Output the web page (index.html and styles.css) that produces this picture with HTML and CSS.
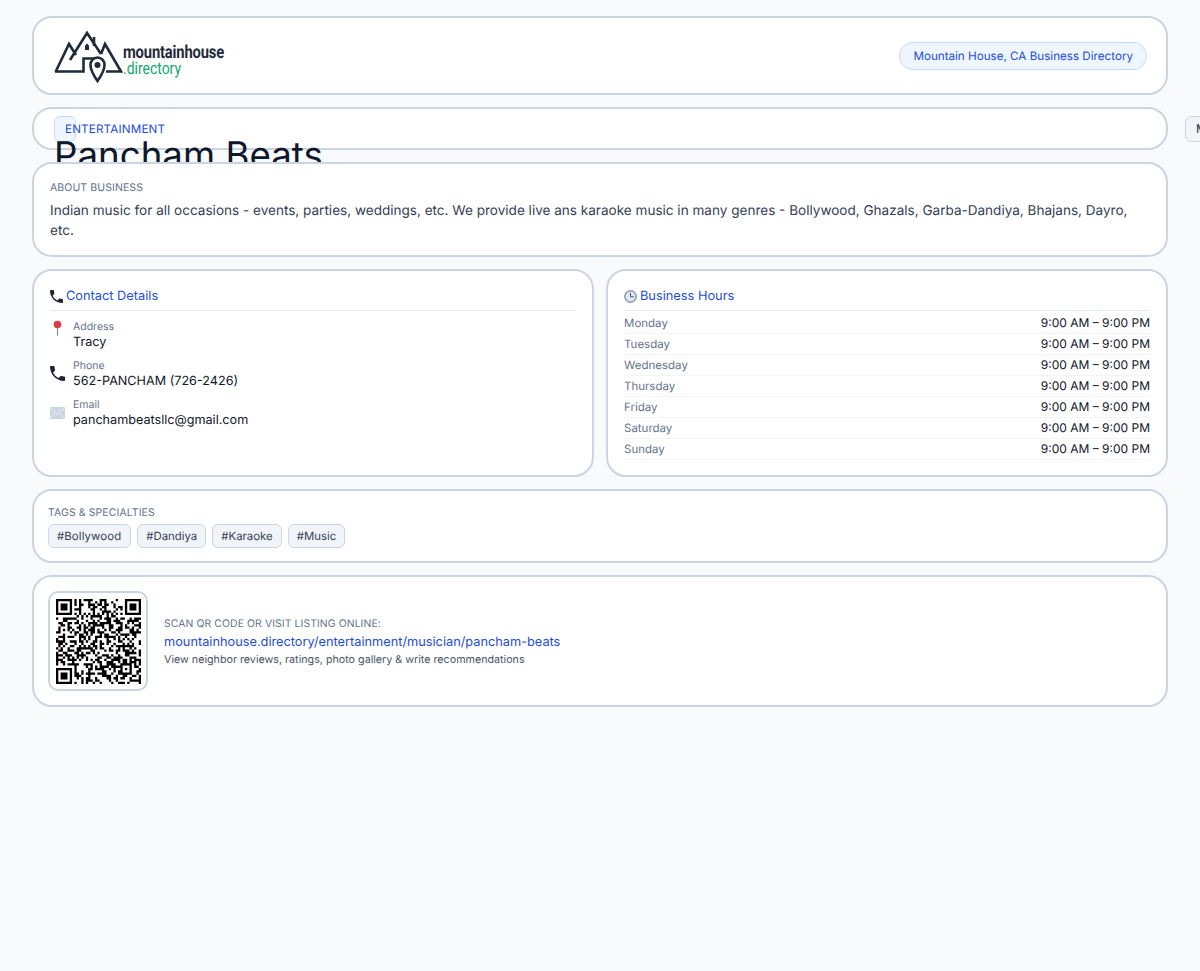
FILE: index.html
```html
<!DOCTYPE html>
<html lang="en">
<head>
<meta charset="utf-8">
<title>Pancham Beats</title>
<link rel="stylesheet" href="styles.css">
</head>
<body>
<main class="page">
  <header class="card topbar">
    <div class="logo">
      <svg class="logo-mark" viewBox="54 29 69 54" width="69" height="54" fill="none" stroke="#1f2a3a" stroke-width="2.600">
        <path d="M55.500 72 L69 44 L76 55"/>
        <path d="M70 60 L87 33 L101 54"/>
        <path d="M101 54 L105 44 L121 71.500 H106"/>
        <path d="M55 71.500 H83.500 V58.500 H95"/>
        <path d="M94 37 V46"/>
        <path d="M85 50 V45.500 L87 43.500 L89 45.500 V50 Z" fill="#1f2a3a" stroke="none"/>
        <path d="M97.500 81 C94 76 90.500 71 90.500 65 A7 7.500 0 0 1 104.500 65 C104.500 71 101 76 97.500 81 Z" fill="#fff"/>
        <circle cx="97.500" cy="65" r="3" fill="#1f2a3a" stroke="none"/>
      </svg>
      <div class="logo-text"><strong>mountainhouse</strong><span>.directory</span></div>
    </div>
    <span class="pill">Mountain House, CA Business Directory</span>
  </header>

  <section class="card hero">
    <div class="hero-left">
      <span class="category"><span class="category-label">ENTERTAINMENT</span></span>
      <h1>Pancham Beats</h1>
    </div>
    <span class="sub-chip">Musician</span>
  </section>

  <section class="card about">
    <h2 class="eyebrow">ABOUT BUSINESS</h2>
    <p>Indian music for all occasions - events, parties, weddings, etc. We provide live ans karaoke music in many genres - Bollywood, Ghazals, Garba-Dandiya, Bhajans, Dayro, etc.</p>
  </section>

  <div class="columns">
    <section class="card panel">
      <h3 class="panel-title">
        <svg class="title-icon" viewBox="3 3 18 18" width="13" height="13"><path fill="#1e2530" d="M6.620 10.790c1.440 2.830 3.760 5.140 6.590 6.590l2.200-2.200c.27-.27.67-.36 1.020-.24 1.120.37 2.330.57 3.570.57.55 0 1 .45 1 1V20c0 .55-.45 1-1 1-9.390 0-17-7.610-17-17 0-.55.45-1 1-1h3.500c.55 0 1 .45 1 1 0 1.250.2 2.450.57 3.570.11.35.03.74-.25 1.020l-2.200 2.200z"/></svg>
        Contact Details
      </h3>
      <div class="contact">
        <svg class="contact-icon pin-icon" viewBox="0 0 15 16" width="15" height="16"><path d="M7.500 7 V15.500" stroke="#8a8f98" stroke-width="1.200"/><circle cx="7.500" cy="4.500" r="3.800" fill="#dd3b4b"/></svg>
        <div><div class="contact-label">Address</div><div class="contact-value">Tracy</div></div>
      </div>
      <div class="contact">
        <svg class="contact-icon" viewBox="3 3 18 18" width="15" height="15"><path fill="#1e2530" d="M6.620 10.790c1.440 2.830 3.760 5.140 6.590 6.590l2.200-2.200c.27-.27.67-.36 1.020-.24 1.120.37 2.330.57 3.570.57.55 0 1 .45 1 1V20c0 .55-.45 1-1 1-9.390 0-17-7.610-17-17 0-.55.45-1 1-1h3.500c.55 0 1 .45 1 1 0 1.250.2 2.450.57 3.570.11.35.03.74-.25 1.020l-2.200 2.200z"/></svg>
        <div><div class="contact-label">Phone</div><div class="contact-value">562-PANCHAM (726-2426)</div></div>
      </div>
      <div class="contact">
        <svg class="contact-icon" viewBox="0 0 15 12" width="15" height="12"><rect width="15" height="12" rx="1" fill="#cbd5e1"/><path d="M.5 1 L7.500 7 L14.500 1 M.5 11 L5.500 5.500 M14.500 11 L9.500 5.500" fill="none" stroke="#f1f5f9" stroke-width=".8"/></svg>
        <div><div class="contact-label">Email</div><div class="contact-value">panchambeatsllc@gmail.com</div></div>
      </div>
    </section>
    <section class="card panel">
      <h3 class="panel-title">
        <svg class="title-icon" viewBox="0 0 13 13" width="13" height="13"><circle cx="6.500" cy="6.500" r="6.500" fill="#94a3b8"/><circle cx="6.500" cy="6.500" r="4.800" fill="#e2e8f0"/><path d="M6.500 3 V6.800 H9.800" fill="none" stroke="#475569" stroke-width="1"/></svg>
        Business Hours
      </h3>
      <div class="hour"><span>Monday</span><b>9:00 AM – 9:00 PM</b></div>
      <div class="hour"><span>Tuesday</span><b>9:00 AM – 9:00 PM</b></div>
      <div class="hour"><span>Wednesday</span><b>9:00 AM – 9:00 PM</b></div>
      <div class="hour"><span>Thursday</span><b>9:00 AM – 9:00 PM</b></div>
      <div class="hour"><span>Friday</span><b>9:00 AM – 9:00 PM</b></div>
      <div class="hour"><span>Saturday</span><b>9:00 AM – 9:00 PM</b></div>
      <div class="hour"><span>Sunday</span><b>9:00 AM – 9:00 PM</b></div>
    </section>
  </div>

  <section class="card tags">
    <h2 class="eyebrow">TAGS &amp; SPECIALTIES</h2>
    <div class="tag-row">
      <span class="tag">#Bollywood</span>
      <span class="tag">#Dandiya</span>
      <span class="tag">#Karaoke</span>
      <span class="tag">#Music</span>
    </div>
  </section>

  <section class="card qr-card">
    <div class="qr-box"><svg class="qr" id="qr" viewBox="0 0 37 37" width="85" height="85"></svg></div>
    <div class="qr-text">
      <div class="qr-eyebrow">SCAN QR CODE OR VISIT LISTING ONLINE:</div>
      <a class="qr-link">mountainhouse.directory/entertainment/musician/pancham-beats</a>
      <div class="qr-note">View neighbor reviews, ratings, photo gallery &amp; write recommendations</div>
    </div>
  </section>
</main>
<script src="qr.js"></script>
</body>
</html>
```
FILE: styles.css
```css
* { box-sizing: border-box; }
html, body { margin: 0; height: 100%; }
body {
  background: #f8fafc;
  font-family: Inter, "Liberation Sans", sans-serif;
  color: #0f172a;
  overflow: hidden;
  text-rendering: geometricPrecision;
}
.page {
  padding: 16px 32px;
  display: flex;
  flex-direction: column;
  gap: 12px;
}
.card {
  position: relative;
  background: #fff;
  border: 2px solid #cbd5e1;
  border-radius: 20px;
}
.topbar {
  height: 79px;
  padding: 0 19px 0 20px;
  display: flex;
  align-items: center;
  justify-content: space-between;
}
.logo { display: flex; align-items: center; }
.logo-mark { display: block; }
.logo-text { display: flex; flex-direction: column; margin-top: 10px; line-height: 16px; transform: scaleX(0.82); transform-origin: left center; }
.logo-text strong { font-family: Roboto, sans-serif; font-size: 18px; font-weight: 700; color: #1f2a3a; letter-spacing: -0.2px; }
.logo-text span { font-family: Roboto, sans-serif; font-size: 17px; font-weight: 400; color: #10a870; }
.pill {
  font-size: 11.650px;
  color: #1d4ed8;
  background: #eff6ff;
  border: 1px solid #bfdbfe;
  border-radius: 14px;
  padding: 5px 13px;
  line-height: 16px;
}
.hero {
  height: 43px;
  position: static;
  padding: 7px 20px;
  display: flex;
  justify-content: space-between;
  white-space: nowrap;
}
.hero-left { width: 22px; }
.category {
  display: block;
  width: 22px;
  height: 26px;
  background: #eff6ff;
  border: 1px solid #bfdbfe;
  border-radius: 6px;
}
.category-label {
  display: block;
  margin-left: 10px;
  margin-top: 4px;
  font-size: 11.680px;
  line-height: 16px;
  letter-spacing: 0.15px;
  color: #1d4ed8;
}
h1 {
  margin: -9px 0 0;
  font-size: 36.700px;
  font-weight: 400;
  line-height: 44px;
  color: #0f172a;
}
.sub-chip {
  width: 60px;
  height: 26px;
  flex: none;
  margin-right: -99px;
  background: #f1f5f9;
  border: 1px solid #cbd5e1;
  border-radius: 6px;
  padding: 0 10px;
  font-size: 12px;
  line-height: 24px;
  color: #1e293b;
}
.eyebrow {
  margin: 0;
  font-size: 10.500px;
  font-weight: 400;
  line-height: 14px;
  color: #64748b;
  letter-spacing: 0.1px;
}
.about { height: 95px; padding: 17px 16px 0; }
.about p {
  margin: 6px 0 0;
  font-size: 13.560px;
  line-height: 20px;
  color: #334155;
}
.columns { display: grid; grid-template-columns: 1fr 1fr; gap: 12px; }
.panel { height: 208px; padding: 16px 16px 0; }
.panel-title {
  margin: 0 0 9px;
  height: 24px;
  display: flex;
  align-items: center;
  gap: 3px;
  font-size: 12.800px;
  font-weight: 400;
  color: #1d4ed8;
  border-bottom: 1px solid #e2e8f0;
  padding-bottom: 5px;
}
.title-icon { flex: none; display: block; }
.contact { display: flex; align-items: center; height: 31px; margin-bottom: 8px; gap: 8px; }
.contact-icon { flex: none; display: block; margin-bottom: 2px; }
.contact .pin-icon { margin-bottom: 16px; }
.contact-label { font-size: 10.500px; line-height: 14px; color: #64748b; }
.contact-value { font-size: 12.640px; line-height: 17px; color: #0f172a; }
.hour {
  display: flex;
  justify-content: space-between;
  align-items: center;
  height: 21px;
  font-size: 11.500px;
  border-bottom: 1px solid #f1f5f9;
  color: #64748b;
}
.panel-title + .hour { margin-top: -7px; }
.hour b { font-weight: 400; font-size: 12px; color: #0f172a; margin-bottom: 1px; }
.tags { height: 74px; padding: 15px 14px 0; }
.tag-row { display: flex; gap: 6px; margin-top: 4px; }
.tag {
  background: #f1f5f9;
  border: 1px solid #cbd5e1;
  border-radius: 6px;
  padding: 0 8px;
  height: 24px;
  line-height: 22px;
  font-size: 11.400px;
  color: #334155;
}
.tag:first-child { padding: 0 9px 0 8px; letter-spacing: 0.1px; }
.qr-card {
  height: 132px;
  padding: 14px;
  display: flex;
  align-items: center;
  gap: 16px;
}
.qr-box {
  width: 100px;
  height: 100px;
  flex: none;
  border: 2px solid #cbd5e1;
  border-radius: 10px;
  display: flex;
  align-items: center;
  justify-content: center;
  background: #fff;
}
.qr { display: block; }
.qr-text { display: flex; flex-direction: column; padding-top: 2px; }
.qr-eyebrow { font-size: 10.400px; line-height: 14px; color: #64748b; letter-spacing: 0.1px; margin-bottom: 4px; }
.qr-link { font-size: 12.770px; line-height: 16px; color: #1d4ed8; }
.qr-note { font-size: 10.720px; line-height: 14px; color: #475569; margin-top: 2px; }
```
FILE: qr.js
```js
// Byte-mode QR encoder, version 5 level M, for the listing URL.
(function () {
  var text = "https://mountainhouse.directory/entertainment/musician/pancham-beats";
  var SIZE = 37, DATA_PER_BLOCK = 43, BLOCKS = 2, EC = 24, TOTAL_DATA = 86;

  var exp = new Array(512), log = new Array(256), v = 1, i, j;
  for (i = 0; i < 255; i++) {
    exp[i] = v; log[v] = i;
    v <<= 1; if (v & 256) v ^= 0x11d;
  }
  for (i = 255; i < 512; i++) exp[i] = exp[i - 255];
  function mul(a, b) { return a && b ? exp[log[a] + log[b]] : 0; }

  var gen = [1];
  for (i = 0; i < EC; i++) {
    var next = new Array(gen.length + 1).fill(0);
    for (j = 0; j < gen.length; j++) {
      next[j] ^= gen[j];
      next[j + 1] ^= mul(gen[j], exp[i]);
    }
    gen = next;
  }
  function rs(data) {
    var r = new Array(EC).fill(0);
    data.forEach(function (d) {
      var f = d ^ r[0];
      r.shift(); r.push(0);
      for (var k = 0; k < EC; k++) r[k] ^= mul(gen[k + 1], f);
    });
    return r;
  }

  var bits = [];
  function put(val, n) { for (var b = n - 1; b >= 0; b--) bits.push((val >> b) & 1); }
  put(4, 4); put(text.length, 8);
  for (i = 0; i < text.length; i++) put(text.charCodeAt(i), 8);
  put(0, Math.min(4, TOTAL_DATA * 8 - bits.length));
  while (bits.length % 8) bits.push(0);
  var bytes = [];
  for (i = 0; i < bits.length; i += 8) bytes.push(parseInt(bits.slice(i, i + 8).join(""), 2));
  for (var pad = 0xec; bytes.length < TOTAL_DATA; pad ^= 0xec ^ 0x11) bytes.push(pad);

  var blocks = [], ecs = [];
  for (i = 0; i < BLOCKS; i++) {
    var blk = bytes.slice(i * DATA_PER_BLOCK, (i + 1) * DATA_PER_BLOCK);
    blocks.push(blk); ecs.push(rs(blk));
  }
  var seq = [];
  for (i = 0; i < DATA_PER_BLOCK; i++) for (j = 0; j < BLOCKS; j++) seq.push(blocks[j][i]);
  for (i = 0; i < EC; i++) for (j = 0; j < BLOCKS; j++) seq.push(ecs[j][i]);

  function grid() {
    var g = [];
    for (var y = 0; y < SIZE; y++) g.push(new Array(SIZE).fill(0));
    return g;
  }
  var base = grid(), fn = grid();
  function setF(x, y, d) {
    if (x < 0 || y < 0 || x >= SIZE || y >= SIZE) return;
    base[y][x] = d ? 1 : 0; fn[y][x] = 1;
  }
  function finder(cx, cy) {
    for (var dy = -4; dy <= 4; dy++) for (var dx = -4; dx <= 4; dx++) {
      var d = Math.max(Math.abs(dx), Math.abs(dy));
      setF(cx + dx, cy + dy, d !== 2 && d !== 4);
    }
  }
  for (i = 0; i < SIZE; i++) { setF(6, i, i % 2 === 0); setF(i, 6, i % 2 === 0); }
  finder(3, 3); finder(SIZE - 4, 3); finder(3, SIZE - 4);
  for (var dy = -2; dy <= 2; dy++) for (var dx = -2; dx <= 2; dx++) {
    setF(30 + dx, 30 + dy, Math.max(Math.abs(dx), Math.abs(dy)) !== 1);
  }
  function format(g, mask, mark) {
    var data = mask, rem = data;
    for (var n = 0; n < 10; n++) rem = (rem << 1) ^ ((rem >>> 9) * 0x537);
    var f = ((data << 10) | rem) ^ 0x5412;
    function bit(k) { return (f >>> k) & 1; }
    function s(x, y, d) { g[y][x] = d; if (mark) fn[y][x] = 1; }
    var k;
    for (k = 0; k <= 5; k++) s(8, k, bit(k));
    s(8, 7, bit(6)); s(8, 8, bit(7)); s(7, 8, bit(8));
    for (k = 9; k < 15; k++) s(14 - k, 8, bit(k));
    for (k = 0; k < 8; k++) s(SIZE - 1 - k, 8, bit(k));
    for (k = 8; k < 15; k++) s(8, SIZE - 15 + k, bit(k));
    s(8, SIZE - 8, 1);
  }
  format(base, 0, true);

  var placed = grid(), idx = 0, total = seq.length * 8;
  for (var right = SIZE - 1; right >= 1; right -= 2) {
    if (right === 6) right = 5;
    for (var vert = 0; vert < SIZE; vert++) for (j = 0; j < 2; j++) {
      var x = right - j, up = ((right + 1) & 2) === 0, y = up ? SIZE - 1 - vert : vert;
      if (!fn[y][x] && idx < total) {
        placed[y][x] = (seq[idx >> 3] >> (7 - (idx & 7))) & 1;
        idx++;
      }
    }
  }

  function maskOn(m, x, y) {
    switch (m) {
      case 0: return (x + y) % 2 === 0;
      case 1: return y % 2 === 0;
      case 2: return x % 3 === 0;
      case 3: return (x + y) % 3 === 0;
      case 4: return (Math.floor(x / 3) + Math.floor(y / 2)) % 2 === 0;
      case 5: return (x * y) % 2 + (x * y) % 3 === 0;
      case 6: return ((x * y) % 2 + (x * y) % 3) % 2 === 0;
      default: return ((x + y) % 2 + (x * y) % 3) % 2 === 0;
    }
  }
  function build(m) {
    var g = grid();
    for (var y = 0; y < SIZE; y++) for (var x = 0; x < SIZE; x++) {
      g[y][x] = fn[y][x] ? base[y][x] : (placed[y][x] ^ (maskOn(m, x, y) ? 1 : 0));
    }
    format(g, m, false);
    return g;
  }
  function lineScore(line) {
    var s = 0, run = 1, a;
    for (a = 1; a <= SIZE; a++) {
      if (a < SIZE && line[a] === line[a - 1]) run++;
      else { if (run >= 5) s += run - 2; run = 1; }
    }
    var str = line.join("");
    var pats = ["10111010000", "00001011101"];
    pats.forEach(function (p) {
      var at = str.indexOf(p);
      while (at !== -1) { s += 40; at = str.indexOf(p, at + 1); }
    });
    return s;
  }
  function score(g) {
    var s = 0, dark = 0, y, x;
    for (y = 0; y < SIZE; y++) {
      s += lineScore(g[y]);
      var col = [];
      for (x = 0; x < SIZE; x++) { col.push(g[x][y]); dark += g[y][x]; }
      s += lineScore(col);
    }
    for (y = 0; y < SIZE - 1; y++) for (x = 0; x < SIZE - 1; x++) {
      var c = g[y][x];
      if (c === g[y][x + 1] && c === g[y + 1][x] && c === g[y + 1][x + 1]) s += 3;
    }
    var tot = SIZE * SIZE;
    s += (Math.ceil(Math.abs(dark * 20 - tot * 10) / tot) - 1) * 10;
    return s;
  }
  var best = null, bestScore = Infinity;
  for (var m = 0; m < 8; m++) {
    var g = build(m), sc = score(g);
    if (sc < bestScore) { bestScore = sc; best = g; }
  }

  var d = "";
  best.forEach(function (row, yy) {
    row.forEach(function (cell, xx) {
      if (cell) d += "M" + xx + " " + yy + "h1v1h-1z";
    });
  });
  var p = document.createElementNS("http://www.w3.org/2000/svg", "path");
  p.setAttribute("d", d);
  p.setAttribute("fill", "#000");
  document.getElementById("qr").appendChild(p);
})();
```
